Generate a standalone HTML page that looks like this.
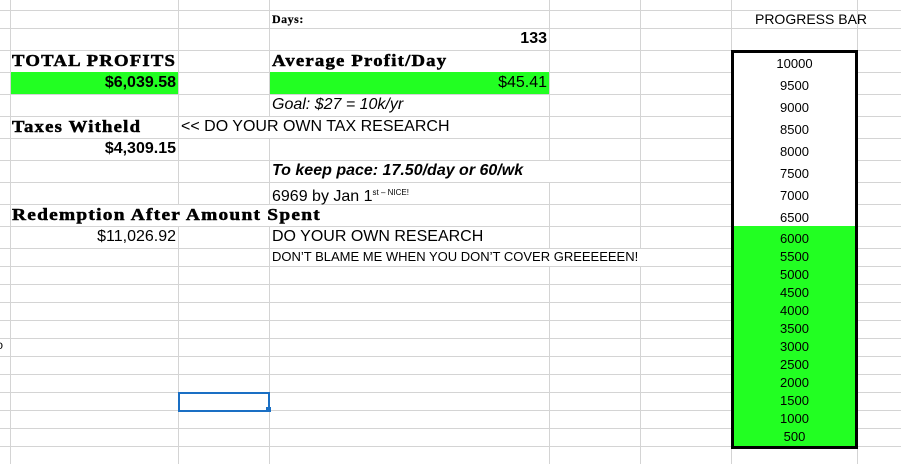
<!DOCTYPE html>
<html><head><style>
body{margin:0;width:901px;height:464px;overflow:hidden;background:#fff;position:relative;font-family:"Liberation Sans",sans-serif;color:#000}
.h{position:absolute;left:0;width:901px;height:1px;background:#d4d4d4}
.v{position:absolute;top:0;height:464px;width:1px;background:#d4d4d4}
.g{position:absolute;background:#22ff22}
.t{position:absolute;white-space:nowrap;line-height:22px;height:22px}
.s{font-family:"Liberation Serif",serif;font-weight:bold;font-size:17px;letter-spacing:1.1px;-webkit-text-stroke:0.5px #000;transform-origin:left center;transform:scaleX(1.1)}
.r{text-align:right}
.box{position:absolute;left:731px;top:50px;width:121px;height:393px;border:3px solid #000;background:#fff;overflow:hidden}
.box div{text-align:center;font-size:13px;width:121px}
</style></head><body>
<div class="h" style="top:10px"></div><div class="h" style="top:28px"></div>
<div class="h" style="top:50px"></div><div class="h" style="top:72px"></div><div class="h" style="top:94px"></div>
<div class="h" style="top:116px"></div><div class="h" style="top:138px"></div><div class="h" style="top:160px"></div>
<div class="h" style="top:182px"></div><div class="h" style="top:204px"></div><div class="h" style="top:226px"></div>
<div class="h" style="top:248px"></div><div class="h" style="top:266px"></div><div class="h" style="top:284px"></div>
<div class="h" style="top:302px"></div><div class="h" style="top:320px"></div><div class="h" style="top:338px"></div>
<div class="h" style="top:356px"></div><div class="h" style="top:374px"></div><div class="h" style="top:392px"></div>
<div class="h" style="top:410px"></div><div class="h" style="top:428px"></div><div class="h" style="top:446px"></div>
<div class="v" style="left:10px"></div><div class="v" style="left:178px"></div><div class="v" style="left:269px"></div>
<div class="v" style="left:549px"></div><div class="v" style="left:640px"></div><div class="v" style="left:731px"></div><div class="v" style="left:857px"></div>
<div class="g" style="left:11px;top:72px;width:167px;height:22px"></div>
<div class="g" style="left:270px;top:72px;width:279px;height:22px"></div>
<div style="position:absolute;left:179px;top:117px;width:370px;height:21px;background:#fff"></div>
<div style="position:absolute;left:11px;top:205px;width:370px;height:21px;background:#fff"></div>
<div style="position:absolute;left:270px;top:161px;width:370px;height:21px;background:#fff"></div>
<div style="position:absolute;left:270px;top:249px;width:460px;height:17px;background:#fff"></div>

<div class="t s" style="left:272px;top:8px;font-size:12px;letter-spacing:.5px;-webkit-text-stroke:0.2px #000;transform:none">Days:</div>
<div class="t" style="left:740px;top:8px;width:142px;text-align:center;font-size:14px">PROGRESS BAR</div>
<div class="t r" style="left:400px;top:28px;width:147px;font-weight:bold;font-size:16px">133</div>
<div class="t s" style="left:12px;top:50px">TOTAL PROFITS</div>
<div class="t s" style="left:272px;top:50px">Average Profit/Day</div>
<div class="t r" style="left:11px;top:72px;width:165px;font-weight:bold;font-size:16px">$6,039.58</div>
<div class="t r" style="left:300px;top:72px;width:247px;font-size:16px">$45.41</div>
<div class="t" style="left:272px;top:94px;font-style:italic;font-size:16px">Goal: $27 = 10k/yr</div>
<div class="t s" style="left:12px;top:116px">Taxes Witheld</div>
<div class="t" style="left:181px;top:116px;font-size:16px">&lt;&lt; DO YOUR OWN TAX RESEARCH</div>
<div class="t r" style="left:11px;top:138px;width:165px;font-weight:bold;font-size:16px">$4,309.15</div>
<div class="t" style="left:272px;top:160px;font-style:italic;font-weight:bold;font-size:16px">To keep pace: 17.50/day or 60/wk</div>
<div class="t" style="left:272px;top:182px;font-size:16px">6969 by Jan 1<sup style="font-size:8px;vertical-align:6px">st – NICE!</sup></div>
<div class="t s" style="left:12px;top:204px;transform:scaleX(1.14)">Redemption After Amount Spent</div>
<div class="t r" style="left:11px;top:226px;width:165px;font-size:16px">$11,026.92</div>
<div class="t" style="left:272px;top:226px;font-size:16px">DO YOUR OWN RESEARCH</div>
<div class="t" style="left:272px;top:247px;font-size:13px;line-height:20px">DON’T BLAME ME WHEN YOU DON’T COVER GREEEEEEN!</div>
<div class="t" style="left:-3px;top:334px;font-size:12px">ↄ</div>

<div class="box">
<div style="height:173px;overflow:hidden">
<div style="line-height:22px;height:22px">10000</div><div style="line-height:22px;height:22px">9500</div>
<div style="line-height:22px;height:22px">9000</div><div style="line-height:22px;height:22px">8500</div>
<div style="line-height:22px;height:22px">8000</div><div style="line-height:22px;height:22px">7500</div>
<div style="line-height:22px;height:22px">7000</div><div style="line-height:22px;height:22px">6500</div>
</div>
<div style="background:#22ff22;height:220px;padding-top:4px;box-sizing:border-box">
<div style="line-height:18px">6000</div><div style="line-height:18px">5500</div><div style="line-height:18px">5000</div>
<div style="line-height:18px">4500</div><div style="line-height:18px">4000</div><div style="line-height:18px">3500</div>
<div style="line-height:18px">3000</div><div style="line-height:18px">2500</div><div style="line-height:18px">2000</div>
<div style="line-height:18px">1500</div><div style="line-height:18px">1000</div><div style="line-height:18px">500</div>
</div>
</div>

<div style="position:absolute;left:178px;top:392px;width:88px;height:16px;border:2px solid #1a6fc4"></div>
<div style="position:absolute;left:266px;top:407px;width:5px;height:5px;background:#1a6fc4"></div>
</body></html>
